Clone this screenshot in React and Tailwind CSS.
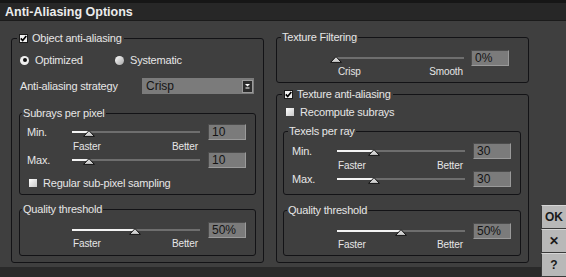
import React from "react";

const text = "text-[11px] tracking-[-0.2px] text-[#e6e6e6]";

const Check = ({ checked }) => (
  <span className="flex h-[9px] w-[9px] shrink-0 items-center justify-center border border-[#1a1a1a] bg-[#f0f0f0]">
    {checked && (
      <svg width="7" height="7" viewBox="0 0 7 7">
        <path d="M0.8 3.4 L2.7 5.5 L6.3 0.9" stroke="#000" strokeWidth="1.7" fill="none" />
      </svg>
    )}
  </span>
);

const Box = () => (
  <span className="h-[8px] w-[8px] shrink-0 bg-gradient-to-br from-[#ffffff] to-[#c8c8c8]" />
);

const Radio = ({ on }) =>
  on ? (
    <span className="flex h-[9px] w-[9px] shrink-0 items-center justify-center rounded-full bg-[#efefef]">
      <span className="h-[4px] w-[4px] rounded-full bg-[#111]" />
    </span>
  ) : (
    <span className="h-[9px] w-[9px] shrink-0 rounded-full bg-gradient-to-br from-[#ffffff] to-[#a8a8a8]" />
  );

const Slider = ({ pct }) => (
  <div className="relative h-[2px] w-[128px] shrink-0 bg-[#6e6e6e]">
    <div className="h-full bg-[#f4f4f4]" style={{ width: `${pct}%` }} />
    <svg
      className="absolute top-[-1px]"
      style={{ left: `calc(${pct}% - 6px)` }}
      width="12"
      height="7"
      viewBox="0 0 12 7"
    >
      <path d="M6 0.6 L11.4 6.4 L0.6 6.4 Z" fill="#d2d2d2" stroke="#111" strokeWidth="1" />
    </svg>
  </div>
);

const Value = ({ v }) => (
  <div className="flex h-[16px] w-[38px] shrink-0 items-center border border-[#4c4c4c] border-b-[#9a9a9a] border-r-[#9a9a9a] bg-[#7b7b7b] pl-[3px] text-[12px] text-[#141414]">
    {v}
  </div>
);

const SliderRow = ({ label, pct, v, lead = 45, gap = "gap-[8px]" }) => (
  <div className={`flex h-[16px] items-center ${gap}`}>
    <div className={`${text} shrink-0`} style={{ width: lead - 8 }}>
      {label}
    </div>
    <Slider pct={pct} />
    <Value v={v} />
  </div>
);

const Ends = ({ lead = 45, left = "Faster", right = "Better", h = "h-[12px]" }) => (
  <div className={`flex ${h} items-center`}>
    <div className="flex w-[128px] justify-between text-[10px] tracking-[-0.1px] text-[#e6e6e6]" style={{ marginLeft: lead }}>
      <span className="pl-[1px]">{left}</span>
      <span className="pr-[2px]">{right}</span>
    </div>
  </div>
);

const Group = ({ legend, legendClass = "ml-[2px] px-[1px]", className = "", children }) => (
  <fieldset className={`rounded-[3px] border border-[#131316] ${className}`}>
    <legend className={`flex h-[14px] items-center gap-[4px] ${legendClass} ${text}`}>{legend}</legend>
    {children}
  </fieldset>
);

export default function App() {
  return (
    <div className="flex h-[277px] w-[566px] flex-col overflow-hidden bg-[#3f3f3f] font-['Liberation_Sans',Arial,sans-serif]">
      <div className="h-[3px] bg-[#161616]" />
      <div className="h-[18px] border-b border-[#1b1b1b] bg-[#272727] pl-[5px] pt-[1px] text-[12.5px] font-bold leading-[17px] text-[#ececec]">
        Anti-Aliasing Options
      </div>

      <div className="flex flex-1">
        <div className="flex w-[541px] flex-col">
          <div className="flex flex-1 gap-[12px] pl-[11px]">
            {/* left column */}
            <Group
              className="mt-[10px] h-[232px] w-[253px] px-[7px] pb-[6px]"
              legendClass="ml-[-2px] px-[2px]"
              legend={
                <>
                  <Check checked />
                  <span>Object anti-aliasing</span>
                </>
              }
            >
              <div className={`mt-[8px] flex h-[14px] items-center pl-[1px] ${text}`}>
                <div className="flex w-[95px] items-center gap-[6px]">
                  <Radio on />
                  <span>Optimized</span>
                </div>
                <div className="flex items-center gap-[6px]">
                  <Radio />
                  <span>Systematic</span>
                </div>
              </div>

              <div className="mt-[11px] flex h-[16px] items-center">
                <div className={`w-[123px] pl-[1px] ${text}`}>Anti-aliasing strategy</div>
                <div className="flex h-[16px] w-[112px] items-center justify-between bg-[#7b7b7b] pl-[4px] pr-[1px]">
                  <span className="text-[12px] text-[#141414]">Crisp</span>
                  <span className="flex h-[13px] w-[11px] items-center justify-center border border-[#9a9a9a] bg-[#2b2b2b]">
                    <svg width="7" height="6" viewBox="0 0 7 6">
                      <path d="M1 1 L6 1 L3.5 3.6 Z" fill="#fff" />
                      <path d="M1.5 5 L5.5 5" stroke="#fff" strokeWidth="1" />
                    </svg>
                  </span>
                </div>
              </div>

              <Group className="mt-[12px] w-[237px] pb-[4px]" legend="Subrays per pixel">
                <div className="pl-[7px]">
                  <div className="mt-[4px]">
                    <SliderRow label="Min." pct={13} v="10" />
                  </div>
                  <Ends />
                  <SliderRow label="Max." pct={13} v="10" />
                  <div className={`mt-[8px] flex h-[14px] items-center gap-[6px] pl-[2px] ${text}`}>
                    <Box />
                    <span>Regular sub-pixel sampling</span>
                  </div>
                </div>
              </Group>

              <Group className="mt-[7px] w-[237px] pb-[7px]" legend="Quality threshold">
                <div className="mt-[6px] pl-[7px]">
                  <SliderRow label="" pct={49} v="50%" />
                  <Ends h="h-[10px]" />
                </div>
              </Group>
            </Group>

            {/* right column */}
            <div className="flex w-[253px] flex-col">
              <Group className="mt-[9px] w-[253px] pb-[6px]" legendClass="ml-[4px] px-[1px]" legend="Texture Filtering">
                <div className="mt-[6px]">
                  <SliderRow label="" pct={0} v="0%" lead={60} gap="gap-[7px]" />
                  <Ends lead={60} left="Crisp" right="Smooth" h="h-[10px]" />
                </div>
              </Group>

              <Group
                className="mt-[4px] w-[253px] px-[6px] pb-[6px]"
                legendClass="ml-[-1px] px-[2px]"
                legend={
                  <>
                    <Check checked />
                    <span>Texture anti-aliasing</span>
                  </>
                }
              >
                <div className={`mt-[4px] flex h-[14px] items-center gap-[6px] pl-[3px] ${text}`}>
                  <Box />
                  <span>Recompute subrays</span>
                </div>

                <Group className="mt-[5px] w-[238px] pb-[7px]" legendClass="ml-[4px] px-[1px]" legend="Texels per ray">
                  <div className="mt-[5px] pl-[8px]">
                    <SliderRow label="Min." pct={29} v="30" />
                    <Ends />
                    <SliderRow label="Max." pct={29} v="30" />
                  </div>
                </Group>

                <Group className="mt-[8px] w-[238px] pb-[6px]" legendClass="ml-[3px] px-[1px]" legend="Quality threshold">
                  <div className="mt-[6px] pl-[8px]">
                    <SliderRow label="" pct={50} v="50%" />
                    <Ends h="h-[10px]" />
                  </div>
                </Group>
              </Group>
            </div>
          </div>
          <div className="h-[10px] bg-[#2a2a2a]" />
        </div>

        <div className="flex w-[25px] flex-col justify-end">
          {["OK", "✕", "?"].map((t) => (
            <div
              key={t}
              className="flex h-[24px] items-center justify-center border-b border-l border-[#3a3a3a] border-t-[#d6d6d6] border-t bg-[#b8b8b8] text-[12px] font-bold text-[#1a1a1a]"
            >
              {t}
            </div>
          ))}
        </div>
      </div>
    </div>
  );
}
